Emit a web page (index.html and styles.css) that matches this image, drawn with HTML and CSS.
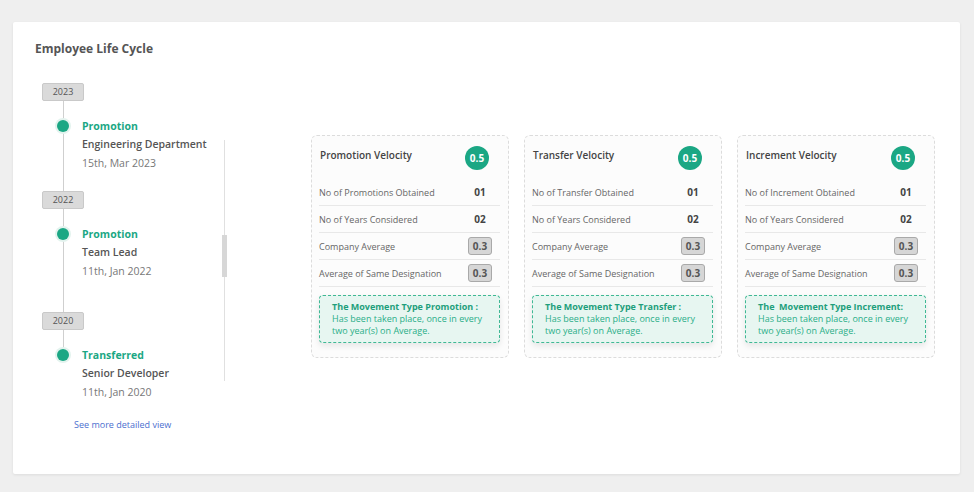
FILE: index.html
```html
<!DOCTYPE html>
<html lang="en">
<head>
    <meta charset="UTF-8">
    <title>Employee Life Cycle</title>
    <link rel="stylesheet" href="styles.css">
</head>
<body>
    <div class="panel">
        <h2 class="panel-title">Employee Life Cycle</h2>

        <div class="panel-body">
            <div class="timeline">
                <div class="year-group">
                    <span class="year">2023</span>
                    <div class="event">
                        <span class="dot"></span>
                        <p class="event-type">Promotion</p>
                        <p class="event-name">Engineering Department</p>
                        <p class="event-date">15th, Mar 2023</p>
                    </div>
                </div>
                <div class="year-group">
                    <span class="year">2022</span>
                    <div class="event">
                        <span class="dot"></span>
                        <p class="event-type">Promotion</p>
                        <p class="event-name">Team Lead</p>
                        <p class="event-date">11th, Jan 2022</p>
                    </div>
                </div>
                <div class="year-group last">
                    <span class="year">2020</span>
                    <div class="event">
                        <span class="dot"></span>
                        <p class="event-type">Transferred</p>
                        <p class="event-name">Senior Developer</p>
                        <p class="event-date">11th, Jan 2020</p>
                    </div>
                </div>
                <a class="more-link" href="#">See more detailed view</a>
            </div>

            <div class="scroll-track"><div class="scroll-thumb"></div></div>

            <div class="velocity-cards">
                <div class="velocity-card">
                    <div class="card-head">
                        <span class="card-title">Promotion Velocity</span>
                        <span class="score">0.5</span>
                    </div>
                    <div class="stat-row"><span>No of Promotions Obtained</span><b>01</b></div>
                    <div class="stat-row"><span>No of Years Considered</span><b>02</b></div>
                    <div class="stat-row"><span>Company Average</span><b class="chip">0.3</b></div>
                    <div class="stat-row"><span>Average of Same Designation</span><b class="chip">0.3</b></div>
                    <div class="note">
                        <strong>The Movement Type Promotion :</strong>
                        Has been taken place, once in every two year(s) on Average.
                    </div>
                </div>

                <div class="velocity-card">
                    <div class="card-head">
                        <span class="card-title">Transfer Velocity</span>
                        <span class="score">0.5</span>
                    </div>
                    <div class="stat-row"><span>No of Transfer Obtained</span><b>01</b></div>
                    <div class="stat-row"><span>No of Years Considered</span><b>02</b></div>
                    <div class="stat-row"><span>Company Average</span><b class="chip">0.3</b></div>
                    <div class="stat-row"><span>Average of Same Designation</span><b class="chip">0.3</b></div>
                    <div class="note">
                        <strong>The Movement Type Transfer :</strong>
                        Has been taken place, once in every two year(s) on Average.
                    </div>
                </div>

                <div class="velocity-card">
                    <div class="card-head">
                        <span class="card-title">Increment Velocity</span>
                        <span class="score">0.5</span>
                    </div>
                    <div class="stat-row"><span>No of Increment Obtained</span><b>01</b></div>
                    <div class="stat-row"><span>No of Years Considered</span><b>02</b></div>
                    <div class="stat-row"><span>Company Average</span><b class="chip">0.3</b></div>
                    <div class="stat-row"><span>Average of Same Designation</span><b class="chip">0.3</b></div>
                    <div class="note">
                        <strong>The &nbsp;Movement Type Increment:</strong>
                        Has been taken place, once in every two year(s) on Average.
                    </div>
                </div>
            </div>
        </div>
    </div>
</body>
</html>
```

FILE: styles.css
```css
body {
    margin: 0;
    padding: 22px 14px 18px 13px;
    background-color: #efefef;
    font-family: 'Open Sans', 'Noto Sans', sans-serif;
    color: #555;
}

p {
    margin: 0;
}

.panel {
    width: 947px;
    height: 452px;
    box-sizing: border-box;
    padding: 18px 22px 0 22px;
    background-color: #fff;
    border-radius: 2px;
    box-shadow: 0 1px 3px rgba(0, 0, 0, 0.08);
}

.panel-title {
    margin: 0;
    font-size: 12px;
    line-height: 18px;
    font-weight: 700;
    color: #555;
}

.panel-body {
    display: flex;
    margin-top: 25px;
}

/* timeline on the left */
.timeline {
    position: relative;
    width: 180px;
    margin-left: 7px;
}

.timeline::before {
    content: '';
    position: absolute;
    left: 21px;
    top: 9px;
    height: 261px;
    width: 1px;
    background-color: #cfcfcf;
}

.year-group {
    position: relative;
    margin-bottom: 18px;
}

.year-group:nth-child(2) {
    margin-bottom: 31px;
}

.year-group.last {
    margin-bottom: 16px;
}

.year {
    display: block;
    position: relative;
    width: 42px;
    height: 18px;
    box-sizing: border-box;
    border: 1px solid #c9c9c9;
    border-radius: 2px;
    background-color: #dadada;
    font-size: 9px;
    line-height: 16px;
    text-align: center;
    color: #555;
}

.event {
    position: relative;
    margin-top: 16px;
    padding-left: 40px;
    font-size: 10.5px;
}

.dot {
    position: absolute;
    left: 15px;
    top: 3px;
    width: 12px;
    height: 12px;
    border-radius: 50%;
    background-color: #1ba784;
    box-shadow: 0 0 0 2px #e3f3ee;
}

.event-type {
    line-height: 18px;
    font-weight: 700;
    color: #1ba784;
}

.event-name {
    line-height: 19px;
    font-weight: 600;
    color: #555;
}

.event-date {
    line-height: 19px;
    color: #777;
}

.more-link {
    display: block;
    margin-left: 32px;
    font-size: 9px;
    line-height: 14px;
    color: #4b6fcf;
    text-decoration: none;
}

/* thin scroll bar beside the timeline */
.scroll-track {
    position: relative;
    width: 5px;
    height: 241px;
    margin-top: 57px;
}

.scroll-track::before {
    content: '';
    position: absolute;
    left: 2px;
    top: 0;
    bottom: 0;
    width: 1px;
    background-color: #e0e0e0;
}

.scroll-thumb {
    position: relative;
    margin-top: 95px;
    height: 42px;
    background-color: #d7d7d7;
}

/* velocity cards */
.velocity-cards {
    display: flex;
    gap: 15px;
    margin-left: 84px;
    margin-top: 52px;
    align-items: flex-start;
}

.velocity-card {
    width: 198px;
    height: 223px;
    box-sizing: border-box;
    padding: 9px 8px 0 7px;
    border: 1px dashed #dcdcdc;
    border-radius: 6px;
    background-color: #fcfcfc;
}

.card-head {
    display: flex;
    align-items: center;
    justify-content: space-between;
    padding: 1px 11px 0 1px;
    height: 24px;
    margin-bottom: 9px;
}

.card-title {
    font-size: 10px;
    font-weight: 600;
    color: #444;
    margin-top: -6px;
}

.score {
    width: 24px;
    height: 24px;
    border-radius: 50%;
    background-color: #1ba784;
    color: #fff;
    font-size: 10px;
    font-weight: 700;
    line-height: 24px;
    text-align: center;
}

.stat-row {
    display: flex;
    align-items: center;
    justify-content: space-between;
    height: 26px;
    border-bottom: 1px solid #e8e8e8;
    font-size: 9px;
    color: #666;
}

.stat-row b {
    width: 24px;
    margin-right: 8px;
    text-align: center;
    font-size: 10px;
    font-weight: 700;
    color: #444;
}

.stat-row b.chip {
    height: 18px;
    box-sizing: border-box;
    line-height: 16px;
    border: 1px solid #a9a9a9;
    border-radius: 3px;
    background-color: #d6d6d6;
    color: #555;
}

.note {
    margin-top: 8px;
    height: 48px;
    box-sizing: border-box;
    padding: 5px 4px 0 12px;
    border: 1px dashed #3fb894;
    border-radius: 4px;
    background-color: #e7f6f1;
    box-shadow: 0 3px 6px rgba(0, 0, 0, 0.09);
    font-size: 9px;
    line-height: 12px;
    color: #2aae88;
}

.note strong {
    display: block;
    font-weight: 700;
    color: #1e9f7c;
}
```
